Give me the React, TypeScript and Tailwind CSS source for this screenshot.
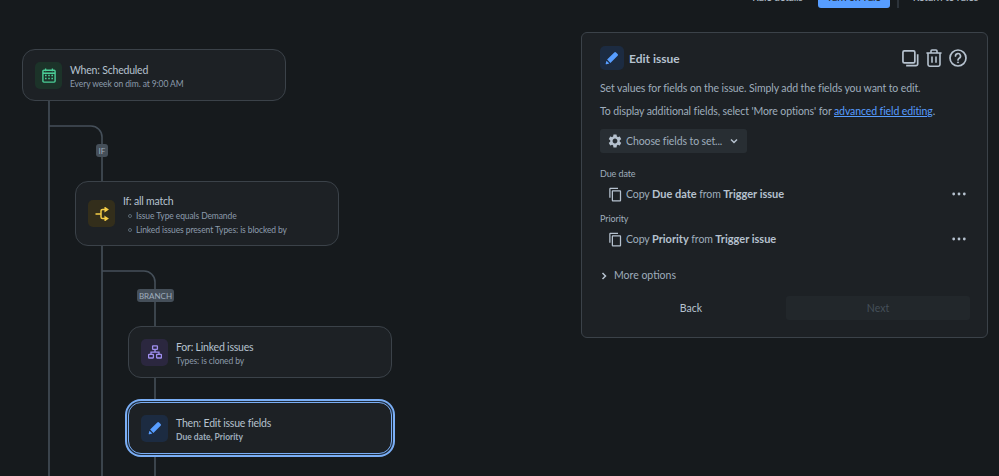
import React from "react";
import { MdContentCopy, MdSettings } from "react-icons/md";

const Pencil = ({ s }: { s: number }) => (
  <svg width={s} height={s} viewBox="0 0 16 16" fill="#579dff">
    <path d="M10.6 1.6a1.4 1.4 0 0 1 2 0l1.8 1.8a1.4 1.4 0 0 1 0 2L6.2 13.6 2.4 9.8z" />
    <path d="M1.7 11 5 14.3l-3.2.9a.8.8 0 0 1-1-1z" />
  </svg>
);

const Calendar = () => (
  <svg width="14" height="15" viewBox="0 0 14 15" fill="none">
    <rect x="0.9" y="2.2" width="12.2" height="11.9" rx="1" stroke="#4bce97" strokeWidth="1.4" />
    <path d="M1 5.2h12" stroke="#4bce97" strokeWidth="1.6" />
    <path d="M3.6 0.6v2.6M10.4 0.6v2.6" stroke="#4bce97" strokeWidth="1.3" />
    <path d="M3 7.6h1.6M6.2 7.6h1.6M9.4 7.6H11M3 10.6h1.6M6.2 10.6h1.6M9.4 10.6H11" stroke="#4bce97" strokeWidth="1.5" />
  </svg>
);

const Branch = () => (
  <svg width="14" height="14" viewBox="0 0 14 14" fill="none" stroke="#f5cd47" strokeWidth="1.5">
    <path d="M0.5 7H5.5M10.5 2.4H7.6A1.6 1.6 0 0 0 6 4V10A1.6 1.6 0 0 0 7.6 11.6H10.5" />
    <path d="M10.2 0.8 12.6 2.4 10.2 4ZM10.2 10 12.6 11.6 10.2 13.2Z" fill="#f5cd47" />
  </svg>
);

const Tree = () => (
  <svg width="14" height="14" viewBox="0 0 14 14" fill="none" stroke="#9f8fef" strokeWidth="1.3">
    <rect x="4.6" y="0.8" width="4.8" height="3.6" rx="0.5" />
    <rect x="0.6" y="9.4" width="4.8" height="3.6" rx="0.5" />
    <rect x="8.6" y="9.4" width="4.8" height="3.6" rx="0.5" />
    <path d="M7 4.4v2.8M3 9.4V7.2h8v2.2" />
  </svg>
);

const Duplicate = () => (
  <svg width="17" height="17" viewBox="0 0 18 18" fill="none" stroke="#b6c2cf" strokeWidth="1.8">
    <rect x="1" y="1" width="12.6" height="12.6" rx="1.4" />
    <path d="M16.6 4.4v10.4a1.8 1.8 0 0 1-1.8 1.8H4.4" />
  </svg>
);

const Trash = () => (
  <svg width="16" height="18" viewBox="0 0 16 18" fill="none" stroke="#b6c2cf" strokeWidth="1.6">
    <path d="M0.4 4h15.2M5 4V2a1 1 0 0 1 1-1h4a1 1 0 0 1 1 1v2" />
    <path d="M2 4v11.6A1.6 1.6 0 0 0 3.6 17.2h8.8a1.6 1.6 0 0 0 1.6-1.6V4" />
    <path d="M6 7.4v6.4M10 7.4v6.4" />
  </svg>
);

const Help = () => (
  <svg width="18" height="18" viewBox="0 0 18 18" fill="none" stroke="#b6c2cf" strokeWidth="1.7">
    <circle cx="9" cy="9" r="8" />
    <path d="M6.5 7a2.5 2.5 0 1 1 3.7 2.2c-.8.5-1.2.9-1.2 1.8" strokeLinecap="round" />
    <circle cx="9" cy="13.4" r="0.6" fill="#b6c2cf" strokeWidth="0.8" />
  </svg>
);

const Dots = () => (
  <svg width="14" height="4" viewBox="0 0 14 4" fill="#b6c2cf">
    <circle cx="1.7" cy="2" r="1.4" />
    <circle cx="7" cy="2" r="1.4" />
    <circle cx="12.3" cy="2" r="1.4" />
  </svg>
);

const Chevron = ({ dir }: { dir: "down" | "right" }) => (
  <svg width="8" height="8" viewBox="0 0 8 8" fill="none" stroke="#b6c2cf" strokeWidth="1.5">
    <path d={dir === "down" ? "M1 2.5 4 5.5 7 2.5" : "M2.5 1 5.5 4 2.5 7"} />
  </svg>
);

const Node = ({
  pos,
  iconBg,
  icon,
  title,
  children,
}: {
  pos: string;
  iconBg: string;
  icon: React.ReactNode;
  title: string;
  children: React.ReactNode;
}) => (
  <div className={`absolute flex w-[264px] items-center gap-[8px] rounded-[13px] border border-[#3b4249] bg-[#1d2125] pl-3 ${pos}`}>
    <div className={`flex h-[27px] w-[27px] flex-none items-center justify-center rounded-[5px] ${iconBg}`}>{icon}</div>
    <div className="min-w-0 pt-[2px]">
      <div className="text-[10.5px] leading-[16px] tracking-[-0.2px] text-[#b6c2cf]">{title}</div>
      {children}
    </div>
  </div>
);

const Label = ({ pos, text }: { pos: string; text: string }) => (
  <div className={`absolute flex h-[13px] items-center justify-center rounded-[3px] bg-[#454f59] text-[8px] text-[#9fadbc] ${pos}`}>
    {text}
  </div>
);

const FieldRow = ({ label, field }: { label: string; field: string }) => (
  <div>
    <div className="text-[9px] leading-[14px] tracking-[-0.1px] text-[#9fadbc]">{label}</div>
    <div className="mt-[4px] flex h-[18px] items-center pl-[8px] pr-[4px]">
      <MdContentCopy size={15} color="#b6c2cf" className="flex-none" />
      <div className="ml-[3px] flex-1 text-[10.5px] tracking-[-0.1px] text-[#9fadbc]">
        Copy <b className="text-[11px] font-bold tracking-normal text-[#b6c2cf]">{field}</b> from <b className="text-[11px] font-bold tracking-normal text-[#b6c2cf]">Trigger issue</b>
      </div>
      <Dots />
    </div>
  </div>
);

export default function App() {
  return (
    <div className="flex h-[476px] w-[999px] flex-col overflow-hidden bg-[#161a1d] font-['Lato','Noto_Sans',sans-serif]">
      <header className="flex h-2 flex-none items-end justify-end pr-[21px] text-[10.5px] leading-[16px] tracking-[-0.2px] text-[#b6c2cf]">
        <span className="mb-[3px] mr-[15px] whitespace-nowrap">Rule details</span>
        <span className="flex h-[26px] w-[72px] flex-none items-end justify-center rounded-[3px] bg-[#579dff] pb-[3px] text-[#1d2125]">Turn off rule</span>
        <span className="ml-[7px] mr-[14px] h-[26px] w-[2px] flex-none bg-[#2c333a]" />
        <span className="mb-[3px] whitespace-nowrap">Return to rules</span>
      </header>
      <main className="flex min-h-0 flex-1">
        <section className="relative w-[581px] flex-none">
          <svg className="absolute left-0 top-0" width="581" height="468" fill="none" stroke="#454f59" strokeWidth="1.6">
            <path d="M49 90V468" />
            <path d="M49 118H91A11 11 0 0 1 102 129V468" />
            <path d="M102 263H144A11 11 0 0 1 155 274V468" />
          </svg>
          <Label pos="left-[96px] top-[136px] w-[12px]" text="IF" />
          <Label pos="left-[137px] top-[281px] w-[37px]" text="BRANCH" />
          <Node
            pos="left-[22px] top-[41px] h-[52px]"
            iconBg="bg-[#1c3329]"
            icon={<Calendar />}
            title="When: Scheduled"
          >
            <div className="text-[8.5px] leading-[13px] tracking-[-0.1px] text-[#8c9bab]">Every week on dim. at 9:00 AM</div>
          </Node>
          <Node
            pos="left-[75px] top-[173px] h-[65px]"
            iconBg="bg-[#332e1b]"
            icon={<Branch />}
            title="If: all match"
          >
            <div className="pl-[5px] text-[8.5px] leading-[14px] tracking-[-0.1px] text-[#8c9bab]">
              <div className="flex items-center gap-[4px]">
                <span className="h-1 w-1 rounded-full border border-[#596773]" />
                Issue Type equals Demande
              </div>
              <div className="flex items-center gap-[4px]">
                <span className="h-1 w-1 rounded-full border border-[#596773]" />
                Linked issues present Types: is blocked by
              </div>
            </div>
          </Node>
          <Node
            pos="left-[128px] top-[318px] h-[52px]"
            iconBg="bg-[#2b273f]"
            icon={<Tree />}
            title="For: Linked issues"
          >
            <div className="text-[8.5px] leading-[13px] tracking-[-0.1px] text-[#8c9bab]">Types: is cloned by</div>
          </Node>
          <Node
            pos="left-[128px] top-[394px] h-[52px] border-[#7aaef5] shadow-[0_0_0_1px_#1d2a3a,0_0_0_3px_#7aaef5]"
            iconBg="bg-[#1c2b41]"
            icon={<Pencil s={14} />}
            title="Then: Edit issue fields"
          >
            <div className="text-[8.5px] font-bold leading-[13px] text-[#9fadbc]">Due date, Priority</div>
          </Node>
        </section>
        <aside className="mt-6 flex h-[306px] w-[407px] flex-none flex-col rounded-[6px] border border-[#3b4249] bg-[#1d2125] pl-[18px] pr-[17px] pt-[13px]">
          <div className="flex h-[24px] items-center">
            <div className="flex h-[24px] w-[24px] items-center justify-center rounded-[5px] bg-[#1c2b41]">
              <Pencil s={14} />
            </div>
            <h2 className="ml-[5px] mt-[1px] flex-1 text-[12px] font-bold text-[#b6c2cf]">Edit issue</h2>
            <div className="flex items-center gap-[7px] pr-[3px]">
              <Duplicate />
              <Trash />
              <Help />
            </div>
          </div>
          <p className="mt-[10px] text-[10.5px] leading-[16px] tracking-[-0.1px] text-[#9fadbc]">Set values for fields on the issue. Simply add the fields you want to edit.</p>
          <p className="mt-[7px] text-[10.5px] leading-[16px] tracking-[-0.1px] text-[#9fadbc]">
            To display additional fields, select 'More options' for <a className="text-[#579dff] underline">advanced field editing</a>.
          </p>
          <button className="mt-[10px] flex h-[24px] w-[147px] items-center rounded-[3px] bg-[#282e33] pl-[7px] text-[10.5px] tracking-[-0.1px] text-[#9fadbc]">
            <MdSettings size={16} color="#b6c2cf" />
            <span className="ml-[3px] mt-[1px] whitespace-nowrap">Choose fields to set...</span>
            <span className="ml-[8px]"><Chevron dir="down" /></span>
          </button>
          <div className="mt-[14px] flex flex-col gap-[9px]">
            <FieldRow label="Due date" field="Due date" />
            <FieldRow label="Priority" field="Priority" />
          </div>
          <div className="mt-[20px] flex h-[16px] items-center gap-[6px] text-[10.5px] text-[#9fadbc]">
            <Chevron dir="right" />
            More options
          </div>
          <div className="mt-[12px] flex h-[24px] items-center text-[10.5px]">
            <button className="h-[24px] w-[186px] pr-[4px] pt-[1px] text-[#b6c2cf]">Back</button>
            <button className="h-[24px] flex-1 rounded-[3px] bg-[#22272b] pt-[1px] text-[#454f59]">Next</button>
          </div>
        </aside>
      </main>
    </div>
  );
}
